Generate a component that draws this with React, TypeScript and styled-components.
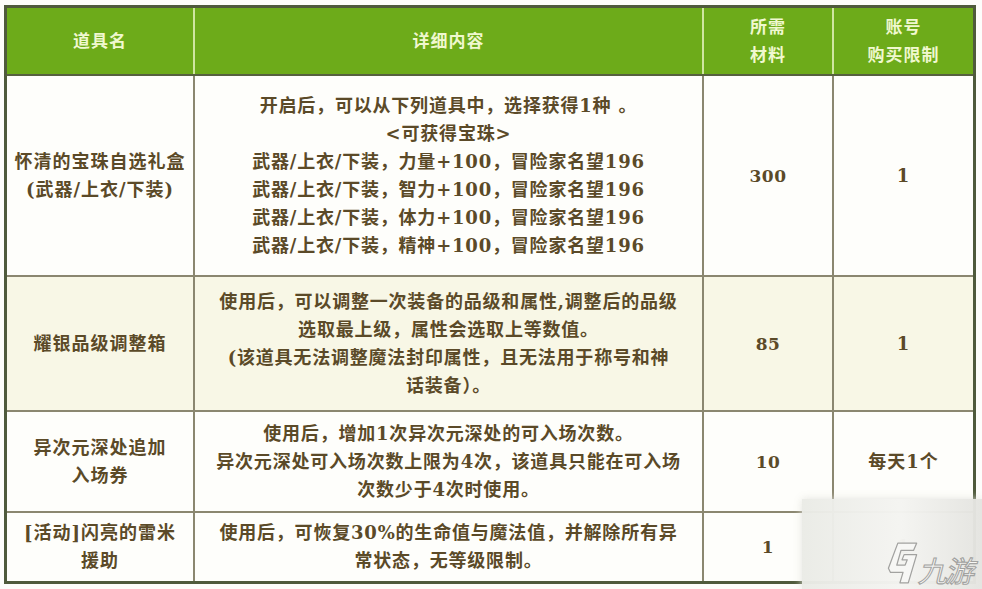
import styled, { createGlobalStyle } from 'styled-components';

const GlobalStyle = createGlobalStyle`
  html, body {
    margin: 0;
    padding: 0;
    background: #fdfdfb;
  }
  body {
    font-family: "DejaVu Serif", "Noto Sans CJK SC", serif;
  }
`

const Page = styled.div`
  position: relative;
  width: 982px;
  height: 589px;
  overflow: hidden;
  padding: 5px 0 0 4px;
  box-sizing: border-box;
`

const TableFrame = styled.div`
  width: 972px;
  border: 3px solid #4f5a3c;
  box-sizing: border-box;
  display: flex;
  flex-direction: column;
  background: #8b8770;
`

const Row = styled.div<{ height: number; header?: boolean; cream?: boolean }>`
  display: grid;
  grid-template-columns: 186px 507px 128px 139px;
  column-gap: 2px;
  height: ${props => props.height}px;
  background: ${props => (props.header ? '#cfe6a0' : '#8b8770')};
  & + & {
    margin-top: 2px;
  }
  & > div {
    background: ${props => (props.header ? '#6dab1a' : props.cream ? '#f8f7e6' : '#fefefb')};
    color: ${props => (props.header ? '#f0f8cf' : '#5b4a28')};
  }
`

const HeaderDivider = styled.div`
  height: 2px;
  background: #56603f;
`

const Cell = styled.div`
  display: flex;
  align-items: center;
  justify-content: center;
  text-align: center;
  font-size: 18px;
  line-height: 28px;
  font-weight: 700;
  letter-spacing: 1px;
  white-space: nowrap;
`

const DetailCell = styled(Cell)`
  letter-spacing: 0.8px;
`

const HeadCell = styled(Cell)`
  font-size: 17px;
`

const NumberCell = styled(Cell)`
  font-size: 17px;
  letter-spacing: 0.5px;
`

const Watermark = styled.div`
  position: absolute;
  left: 802px;
  top: 499px;
  width: 180px;
  height: 90px;
  background: linear-gradient(90deg, rgba(234, 235, 230, 0.97) 0%, rgba(244, 244, 241, 0.98) 55%, rgba(228, 228, 224, 0.97) 100%);
  box-shadow: 0 0 8px rgba(225, 225, 220, 0.9);
  display: flex;
  align-items: flex-end;
  justify-content: flex-end;
  padding: 0 7px 3px 0;
  box-sizing: border-box;
  gap: 2px;
`

const WatermarkText = styled.span`
  font-family: "Noto Sans CJK SC", sans-serif;
  font-size: 29px;
  font-weight: 400;
  color: #f7f7f5;
  -webkit-text-stroke: 1.1px #a2a2a0;
  line-height: 34px;
  letter-spacing: -2px;
  display: inline-block;
  transform: skewX(-14deg);
`

const rows = [
  {
    height: 199,
    name: ['怀清的宝珠自选礼盒', '(武器/上衣/下装)'],
    detail: [
      '开启后，可以从下列道具中，选择获得1种 。',
      '<可获得宝珠>',
      '武器/上衣/下装，力量+100，冒险家名望196',
      '武器/上衣/下装，智力+100，冒险家名望196',
      '武器/上衣/下装，体力+100，冒险家名望196',
      '武器/上衣/下装，精神+100，冒险家名望196',
    ],
    cost: '300',
    limit: '1',
  },
  {
    height: 133,
    cream: true,
    name: ['耀银品级调整箱'],
    detail: [
      '使用后，可以调整一次装备的品级和属性,调整后的品级',
      '选取最上级，属性会选取上等数值。',
      '(该道具无法调整魔法封印属性，且无法用于称号和神',
      '话装备）。',
    ],
    cost: '85',
    limit: '1',
  },
  {
    height: 99,
    name: ['异次元深处追加', '入场券'],
    detail: [
      '使用后，增加1次异次元深处的可入场次数。',
      '异次元深处可入场次数上限为4次，该道具只能在可入场',
      '次数少于4次时使用。',
    ],
    cost: '10',
    limit: '每天1个',
  },
  {
    height: 68,
    name: ['[活动]闪亮的雷米', '援助'],
    detail: ['使用后，可恢复30%的生命值与魔法值，并解除所有异', '常状态，无等级限制。'],
    cost: '1',
    limit: '1',
  },
]

const Lines = ({ lines }: { lines: string[] }) => (
  <span>
    {lines.map((line, i) => (
      <span key={i}>
        {line}
        {i < lines.length - 1 && <br />}
      </span>
    ))}
  </span>
)

const App = () => {
  return (
    <Page>
      <GlobalStyle />
      <TableFrame>
        <Row height={66} header>
          <HeadCell>道具名</HeadCell>
          <HeadCell>详细内容</HeadCell>
          <HeadCell>
            <Lines lines={['所需', '材料']} />
          </HeadCell>
          <HeadCell>
            <Lines lines={['账号', '购买限制']} />
          </HeadCell>
        </Row>
        <HeaderDivider />
        {rows.map((row, i) => (
          <Row key={i} height={row.height} cream={row.cream}>
            <Cell>
              <Lines lines={row.name} />
            </Cell>
            <DetailCell>
              <Lines lines={row.detail} />
            </DetailCell>
            <NumberCell>{row.cost}</NumberCell>
            <Cell>{row.limit}</Cell>
          </Row>
        ))}
      </TableFrame>
      <Watermark>
        <svg width="34" height="46" viewBox="0 0 32 44">
          <path
            d="M12 3 L30 3 L27 10 L15 10 L11 24 L19 24 L21 19 L16 19 L18 14 L30 14 L22 41 L14 41 L17 31 L5 31 L3 27 Z"
            fill="#f7f7f5"
            stroke="#a2a2a0"
            strokeWidth="1.2"
            strokeLinejoin="round"
          />
        </svg>
        <WatermarkText>九游</WatermarkText>
      </Watermark>
    </Page>
  )
}

export default App;
